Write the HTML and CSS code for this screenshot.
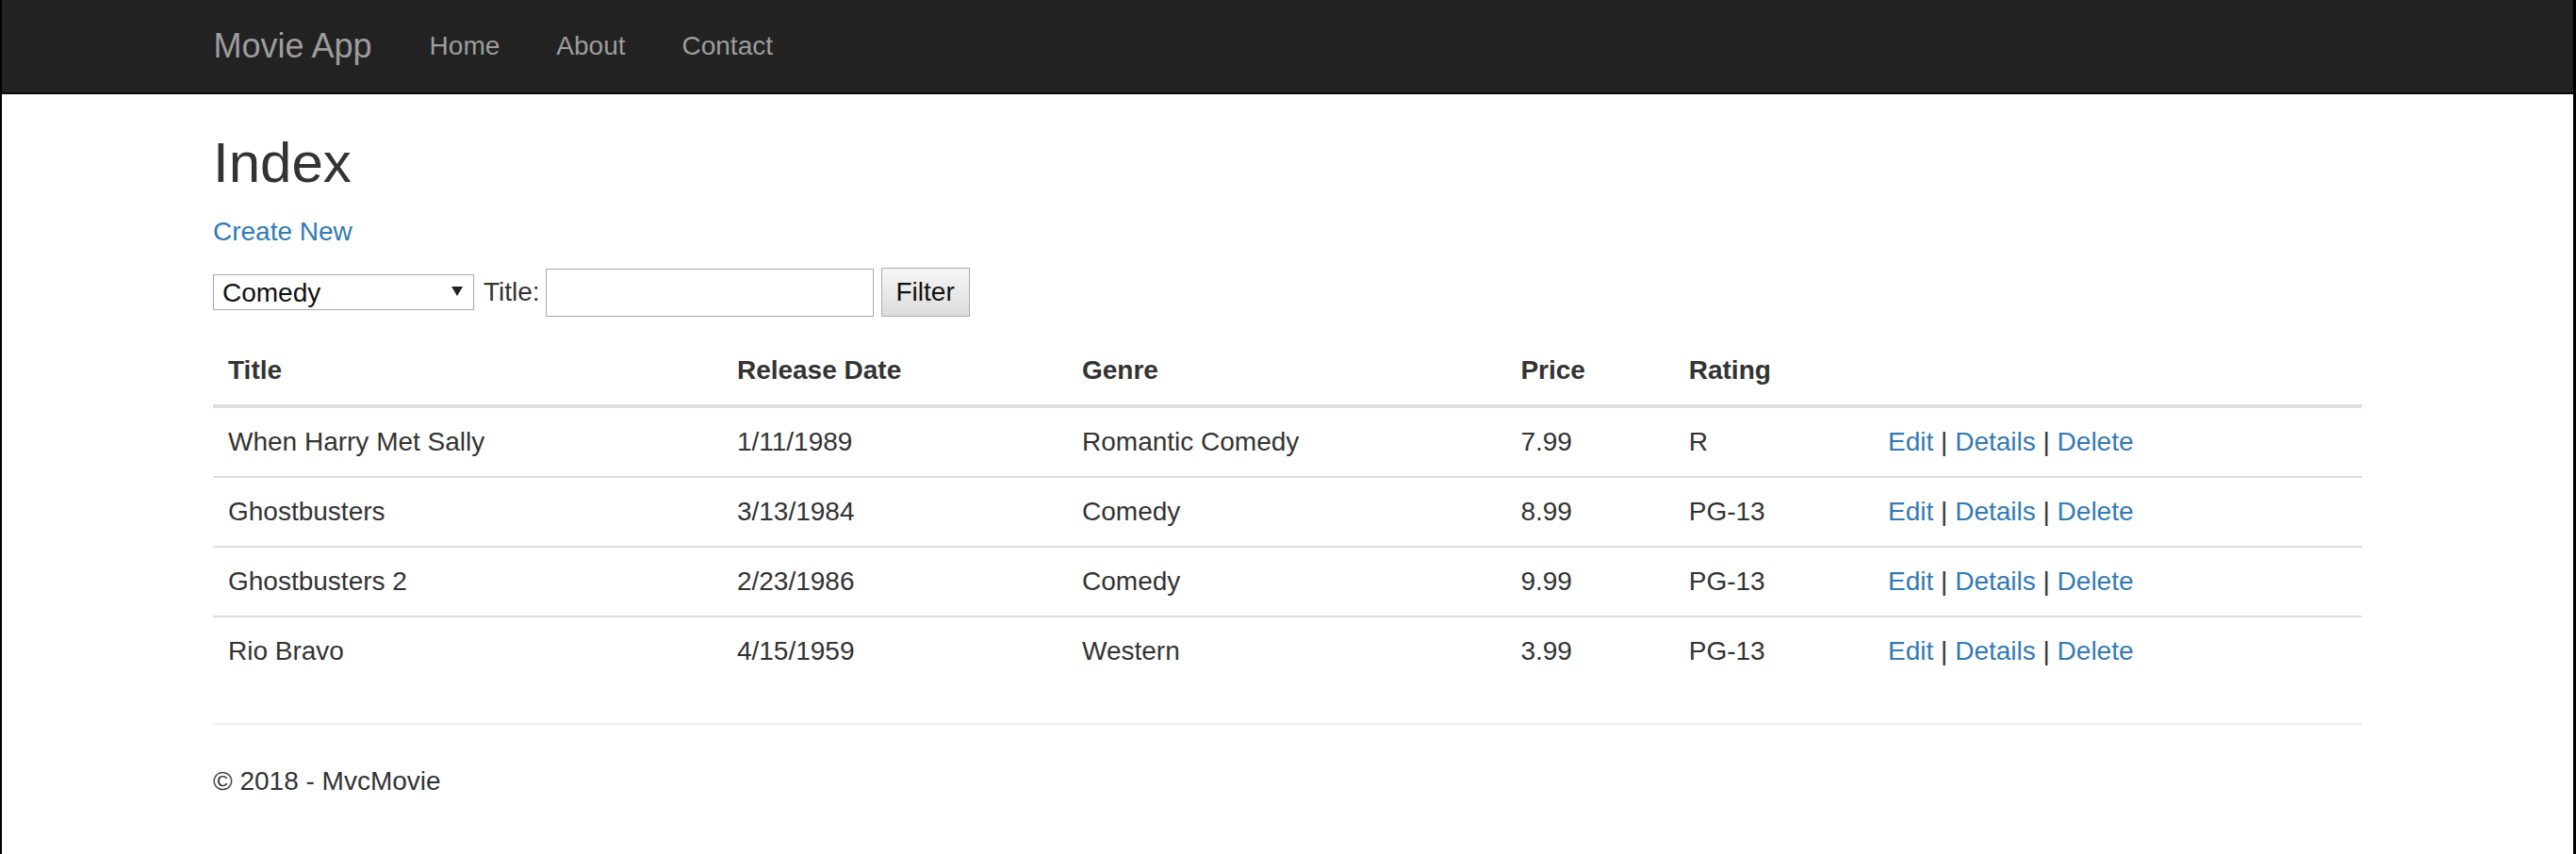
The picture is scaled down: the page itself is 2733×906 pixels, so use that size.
FILE: index.html
```html
<!DOCTYPE html>
<html lang="en">
<head>
<meta charset="utf-8">
<title>Index - Movie App</title>
<link rel="stylesheet" href="styles.css">
</head>
<body>
<div class="frame">
  <nav class="navbar">
    <div class="container nav-inner">
      <a class="brand" href="#">Movie App</a>
      <ul class="nav">
        <li><a class="nav-link" href="#">Home</a></li>
        <li><a class="nav-link" href="#">About</a></li>
        <li><a class="nav-link" href="#">Contact</a></li>
      </ul>
    </div>
  </nav>
  <main class="main">
    <div class="container body-content">
      <h2 class="page-title">Index</h2>
      <p class="create"><a class="link" href="#">Create New</a></p>
      <form class="filter" onsubmit="return false;">
        <span class="select-wrap">
          <select class="genre">
            <option value="">All</option>
            <option value="Comedy" selected>Comedy</option>
            <option value="Romantic Comedy">Romantic Comedy</option>
            <option value="Western">Western</option>
          </select>
        </span>
        <label class="filter-label">Title:</label>
        <input class="filter-input" type="text">
        <button class="filter-btn" type="submit">Filter</button>
      </form>
      <table class="table">
        <thead>
          <tr>
            <th>Title</th>
            <th>Release Date</th>
            <th>Genre</th>
            <th>Price</th>
            <th>Rating</th>
            <th></th>
          </tr>
        </thead>
        <tbody>
          <tr>
            <td>When Harry Met Sally</td>
            <td>1/11/1989</td>
            <td>Romantic Comedy</td>
            <td>7.99</td>
            <td>R</td>
            <td><a class="link" href="#">Edit</a> | <a class="link" href="#">Details</a> | <a class="link" href="#">Delete</a></td>
          </tr>
          <tr>
            <td>Ghostbusters</td>
            <td>3/13/1984</td>
            <td>Comedy</td>
            <td>8.99</td>
            <td>PG-13</td>
            <td><a class="link" href="#">Edit</a> | <a class="link" href="#">Details</a> | <a class="link" href="#">Delete</a></td>
          </tr>
          <tr>
            <td>Ghostbusters 2</td>
            <td>2/23/1986</td>
            <td>Comedy</td>
            <td>9.99</td>
            <td>PG-13</td>
            <td><a class="link" href="#">Edit</a> | <a class="link" href="#">Details</a> | <a class="link" href="#">Delete</a></td>
          </tr>
          <tr>
            <td>Rio Bravo</td>
            <td>4/15/1959</td>
            <td>Western</td>
            <td>3.99</td>
            <td>PG-13</td>
            <td><a class="link" href="#">Edit</a> | <a class="link" href="#">Details</a> | <a class="link" href="#">Delete</a></td>
          </tr>
        </tbody>
      </table>
      <hr class="rule">
      <footer class="footer">
        <p class="footer-text">&copy; 2018 - MvcMovie</p>
      </footer>
    </div>
  </main>
</div>
</body>
</html>
```
FILE: styles.css
```css
* {
  box-sizing: border-box;
}

html, body {
  margin: 0;
  padding: 0;
}

body {
  font-family: "Liberation Sans", Arial, Helvetica, sans-serif;
  font-size: 28px;
  line-height: 40px;
  color: #333;
  background: #fff;
}

.frame {
  min-height: 100vh;
  border-left: 2px solid #000;
  border-right: 3px solid #000;
}

.container {
  width: 2340px;
  margin: 0 auto;
  padding: 0 30px;
}

/* Navbar */
.navbar {
  height: 100px;
  padding-left: 1px;
  background: #222;
  border-bottom: 2px solid #080808;
}

.nav-inner {
  display: flex;
  align-items: flex-start;
  height: 98px;
}

.brand {
  display: block;
  margin-left: -30px;
  padding: 29px 31px 31px 30px;
  font-size: 36px;
  line-height: 40px;
  color: #9d9d9d;
  text-decoration: none;
}

.nav {
  display: flex;
  margin: 0;
  padding: 0;
  list-style: none;
}

.nav-link {
  display: block;
  padding: 29px 30px 31px;
  font-size: 28px;
  line-height: 40px;
  color: #9d9d9d;
  text-decoration: none;
}

/* Content */
.main {
  padding-left: 0;
}

.page-title {
  margin: 40px 0 20px;
  font-size: 60px;
  line-height: 66px;
  font-weight: normal;
  color: #333;
}

.create {
  margin: 0 0 18px;
}

.link {
  color: #337ab7;
  text-decoration: none;
}

/* Filter form */
.filter {
  display: flex;
  align-items: center;
  height: 52px;
  margin: 0 0 21px;
}

.select-wrap {
  position: relative;
  display: block;
  width: 277px;
  height: 38px;
}

.select-wrap::after {
  content: "";
  position: absolute;
  right: 12px;
  top: 13px;
  width: 0;
  height: 0;
  border-left: 6px solid transparent;
  border-right: 6px solid transparent;
  border-top: 10px solid #222;
  pointer-events: none;
}

.genre {
  -webkit-appearance: none;
  appearance: none;
  display: block;
  width: 100%;
  height: 100%;
  margin: 0;
  padding: 0 0 0 9px;
  border: 1px solid #a9a9a9;
  border-radius: 0;
  background: #fff;
  font-family: inherit;
  font-size: 28px;
  line-height: normal;
  color: #111;
}

.filter-label {
  margin-left: 10px;
  color: #333;
}

.filter-input {
  width: 348px;
  height: 51px;
  margin: 0 0 0 6px;
  padding: 0 4px;
  border: 1px solid #a9a9a9;
  border-radius: 0;
  background: #fff;
  font-family: inherit;
  font-size: 28px;
  color: #111;
}

.filter-btn {
  width: 94px;
  height: 52px;
  margin: 0 0 0 8px;
  padding: 0;
  border: 1px solid #adadad;
  border-radius: 0;
  background: linear-gradient(#f6f6f6, #dcdcdc);
  font-family: inherit;
  font-size: 28px;
  line-height: 40px;
  color: #111;
}

/* Table */
.table {
  width: 100%;
  border-collapse: collapse;
  border-spacing: 0;
  margin: 0 0 40px;
}

.table th,
.table td {
  padding: 16px;
  line-height: 40px;
  text-align: left;
}

.table th {
  vertical-align: bottom;
  font-weight: bold;
  border-bottom: 4px solid #ddd;
}

.table td {
  vertical-align: top;
  border-top: 2px solid #ddd;
}

.rule {
  height: 0;
  margin: 40px 0;
  border: 0;
  border-top: 2px solid #eee;
}

.footer-text {
  margin: 0 0 20px;
}
```
